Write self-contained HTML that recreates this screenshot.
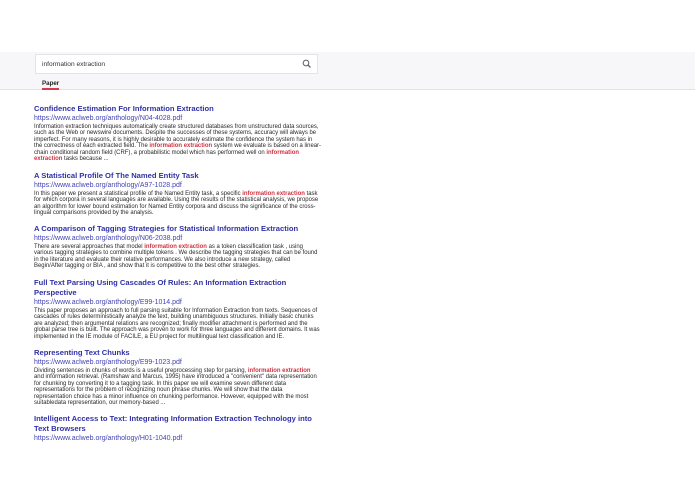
<!DOCTYPE html>
<html><head><meta charset="utf-8"><style>
*{margin:0;padding:0;box-sizing:border-box}
body{width:695px;height:494px;background:#fff;font-family:"Liberation Sans",Arial,sans-serif;position:relative;overflow:hidden}
.band{position:absolute;left:0;top:52px;width:695px;height:38px;background:#f7f7f9;border-bottom:1px solid #e2e2e6}
.search{position:absolute;left:35px;top:54px;width:283px;height:20px;background:#fff;border:1px solid #e4e4e8;font-size:6.6px;color:#333;padding:6px 0 0 6px}
.search svg{position:absolute;right:5px;top:4px}
.tab{position:absolute;left:42px;top:80px;font-size:6.2px;font-weight:bold;color:#222}
.ul{position:absolute;left:42px;top:88px;width:17px;height:1.5px;background:#d43a4a}
.r{position:absolute;left:34px;width:287px}
.t{font-size:7.6px;font-weight:bold;color:#3030a4;line-height:10px}
.u{font-size:7px;color:#4444b4;line-height:9px}
.b{font-size:5.95px;color:#2a2a2a;line-height:6.55px;margin-top:0.5px}
.h{color:#d0323e;font-weight:bold}
</style></head><body>
<div class="band"></div>
<div class="search">information extraction<svg width="10" height="10" viewBox="0 0 10 10"><circle cx="4" cy="4" r="2.8" fill="none" stroke="#667" stroke-width="1.1"/><path d="M6 6L8.5 8.5" stroke="#667" stroke-width="1.3"/></svg></div>
<div class="tab">Paper</div><div class="ul"></div>

<div class="r" style="top:104px"><div class="t">Confidence Estimation For Information Extraction</div><div class="u">https://www.aclweb.org/anthology/N04-4028.pdf</div><div class="b">Information extraction techniques automatically create structured databases from unstructured data sources, such as the Web or newswire documents. Despite the successes of these systems, accuracy will always be imperfect. For many reasons, it is highly desirable to accurately estimate the confidence the system has in the correctness of each extracted field. The <span class="h">information extraction</span> system we evaluate is based on a linear-chain conditional random field (CRF), a probabilistic model which has performed well on <span class="h">information extraction</span> tasks because ...</div></div>

<div class="r" style="top:171px"><div class="t">A Statistical Profile Of The Named Entity Task</div><div class="u">https://www.aclweb.org/anthology/A97-1028.pdf</div><div class="b">In this paper we present a statistical profile of the Named Entity task, a specific <span class="h">information extraction</span> task for which corpora in several languages are available. Using the results of the statistical analysis, we propose an algorithm for lower bound estimation for Named Entity corpora and discuss the significance of the cross-lingual comparisons provided by the analysis.</div></div>

<div class="r" style="top:224px"><div class="t">A Comparison of Tagging Strategies for Statistical Information Extraction</div><div class="u">https://www.aclweb.org/anthology/N06-2038.pdf</div><div class="b">There are several approaches that model <span class="h">information extraction</span> as a token classification task , using various tagging strategies to combine multiple tokens . We describe the tagging strategies that can be found in the literature and evaluate their relative performances. We also introduce a new strategy, called Begin/After tagging or BIA , and show that it is competitive to the best other strategies.</div></div>

<div class="r" style="top:278px"><div class="t">Full Text Parsing Using Cascades Of Rules: An Information Extraction Perspective</div><div class="u">https://www.aclweb.org/anthology/E99-1014.pdf</div><div class="b">This paper proposes an approach to full parsing suitable for Information Extraction from texts. Sequences of cascades of rules deterministically analyze the text, building unambiguous structures. Initially basic chunks are analyzed; then argumental relations are recognized; finally modifier attachment is performed and the global parse tree is built. The approach was proven to work for three languages and different domains. It was implemented in the IE module of FACILE, a EU project for multilingual text classification and IE.</div></div>

<div class="r" style="top:348px"><div class="t">Representing Text Chunks</div><div class="u">https://www.aclweb.org/anthology/E99-1023.pdf</div><div class="b">Dividing sentences in chunks of words is a useful preprocessing step for parsing, <span class="h">information extraction</span> and information retrieval. (Ramshaw and Marcus, 1995) have introduced a "convenient" data representation for chunking by converting it to a tagging task. In this paper we will examine seven different data representations for the problem of recognizing noun phrase chunks. We will show that the data representation choice has a minor influence on chunking performance. However, equipped with the most suitabledata representation, our memory-based ...</div></div>

<div class="r" style="top:414px"><div class="t">Intelligent Access to Text: Integrating Information Extraction Technology into Text Browsers</div><div class="u">https://www.aclweb.org/anthology/H01-1040.pdf</div></div>
</body></html>
